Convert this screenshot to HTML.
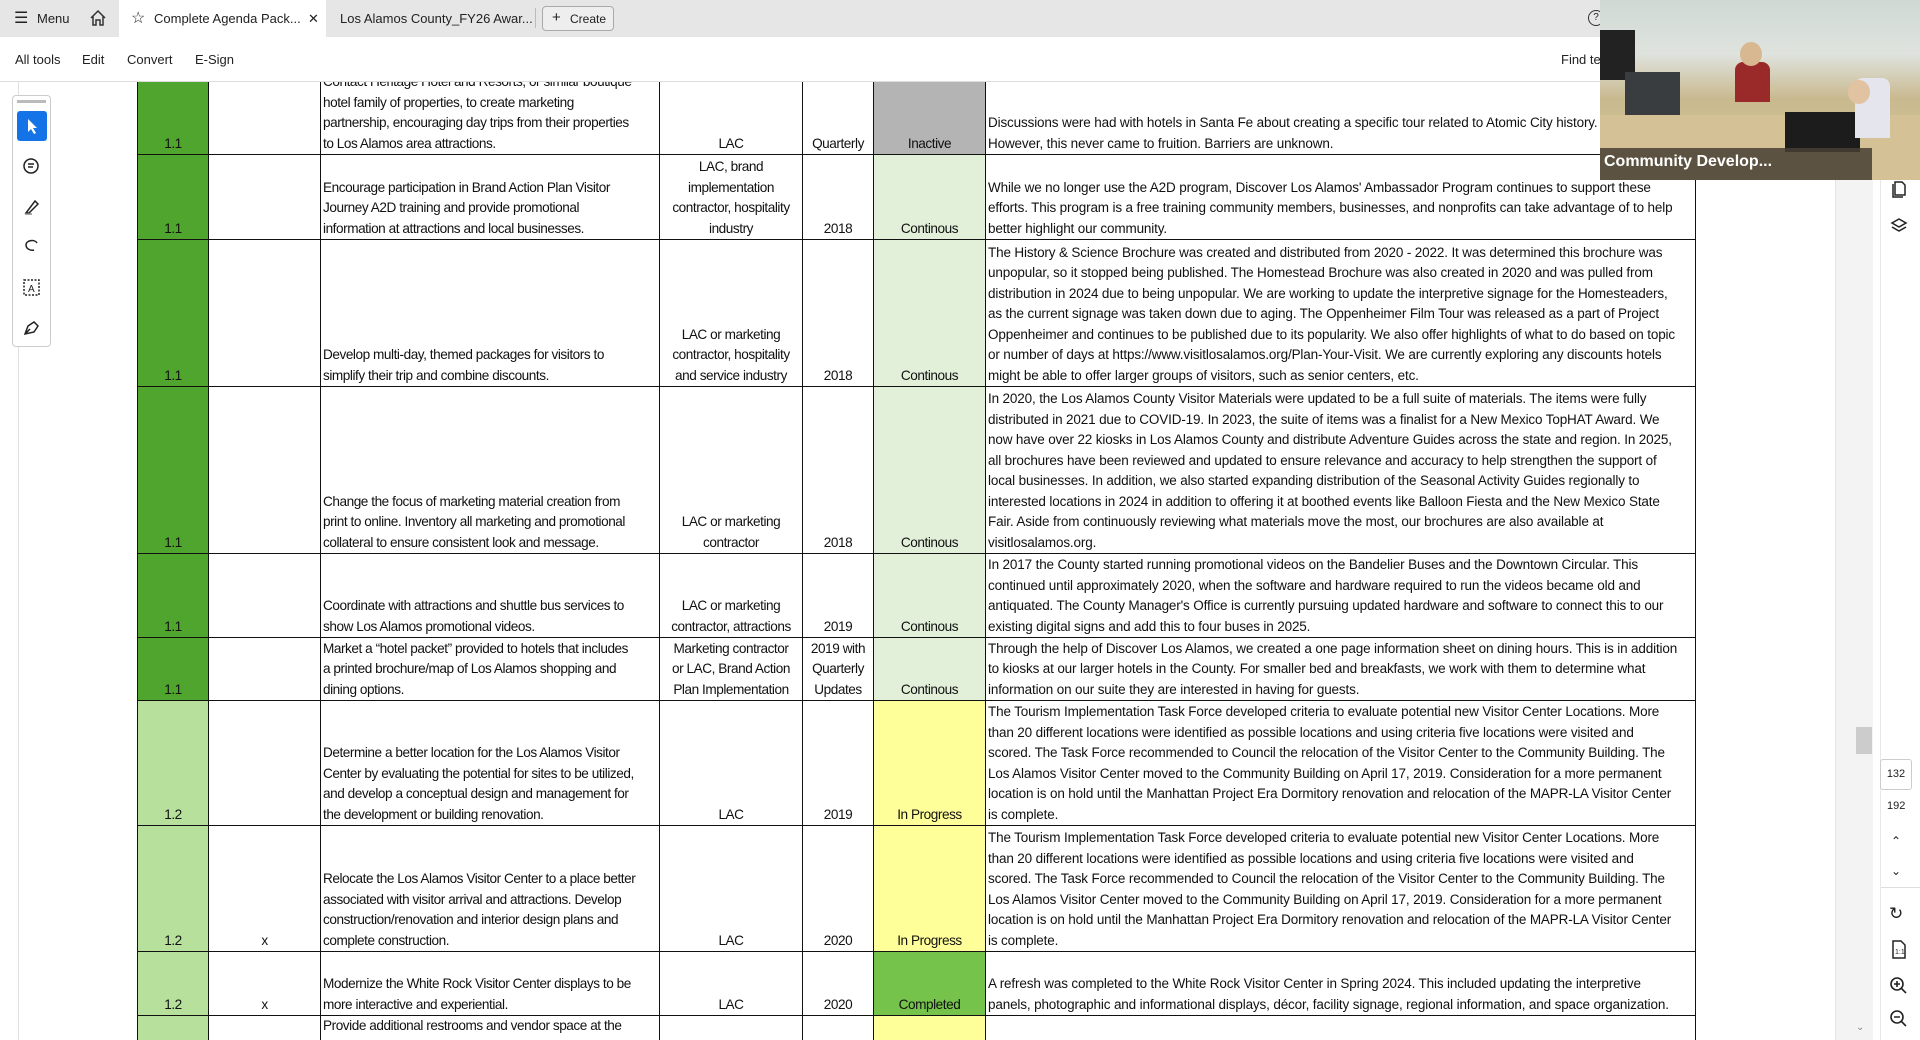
<!DOCTYPE html>
<html><head><meta charset="utf-8"><style>
*{box-sizing:border-box;margin:0;padding:0}
html,body{width:1920px;height:1040px;overflow:hidden}
body{background:#fff;font-family:"Liberation Sans",sans-serif;position:relative;color:#222}
.tabbar{position:absolute;left:0;top:0;width:1920px;height:37px;background:#e6e6e6}
.tb{position:absolute;top:11px;font-size:13px;color:#222;white-space:nowrap}
.toolbar{position:absolute;left:0;top:37px;width:1920px;height:45px;background:#fff;border-bottom:1px solid #ddd}
.tl{position:absolute;top:15px;font-size:13px;color:#222}
.clip{position:absolute;left:0;top:82px;width:1880px;height:958px;overflow:hidden;background:#fff}
table{position:absolute;left:137px;top:-13px;border-collapse:collapse;table-layout:fixed;font-size:13.6px;letter-spacing:-0.45px;line-height:20.5px;color:#111}
td{border:1px solid #111;vertical-align:bottom;padding:0 2px 0 2px;white-space:nowrap;overflow:hidden}
td.c{text-align:center}
td.n{letter-spacing:-0.15px;font-size:13.5px}
.dg{background:#4fa52e}.lg{background:#b6e09c}.cont{background:#e2f0d9}.ina{background:#b4b4b4}.ip{background:#ffff99}.cmp{background:#76c34c}
.lt{position:absolute;left:12px;top:95px;width:39px;height:252px;border:1px solid #ccc;border-radius:4px;background:#fff}
.ic{position:absolute;left:4px;width:30px;height:30px}
.vline{position:absolute;left:18px;top:82px;width:1px;height:958px;background:#e0e0e0}
.rp{position:absolute;left:1880px;top:82px;width:40px;height:958px;background:#fff;border-left:1px solid #e8e8e8}
.sb{position:absolute;left:1835px;top:82px;width:38px;height:958px;background:#f3f3f3;border-left:1px solid #e4e4e4}
.video{position:absolute;left:1600px;top:0;width:320px;height:180px;background:linear-gradient(180deg,#cfd9d4 0%,#dfe3de 30%,#c9b98f 55%,#d8c89c 100%);overflow:hidden}
.vl{position:absolute;left:0;top:148px;width:272px;height:32px;background:rgba(70,62,50,.85);color:#fff;font-weight:bold;font-size:16px;padding:5px 4px}
</style></head><body>
<div class="tabbar">
 <div class="tb" style="left:14px;font-size:16px;top:8px">☰</div>
 <div class="tb" style="left:37px">Menu</div>
 <svg style="position:absolute;left:89px;top:9px" width="18" height="18" viewBox="0 0 18 18" fill="none" stroke="#333" stroke-width="1.5"><path d="M2 9 L9 2 L16 9 M4 7 V16 H7 V11 H11 V16 H14 V7"/></svg>
 <div style="position:absolute;left:119px;top:0;width:207px;height:37px;background:#fff"></div>
 <div class="tb" style="left:131px;font-size:16px;top:8px">☆</div>
 <div class="tb" style="left:154px">Complete Agenda Pack...</div>
 <div class="tb" style="left:308px">✕</div>
 <div class="tb" style="left:340px">Los Alamos County_FY26 Awar...</div>
 <div style="position:absolute;left:535px;top:8px;width:1px;height:20px;background:#bbb"></div>
 <div style="position:absolute;left:542px;top:6px;width:72px;height:25px;border:1px solid #aaa;border-radius:4px;background:#eee"></div>
 <div class="tb" style="left:552px;top:9px;font-size:15px">+</div>
 <div class="tb" style="left:570px;top:12px;font-size:12px">Create</div>
 <div style="position:absolute;left:1588px;top:10px;width:16px;height:16px;border:1.5px solid #333;border-radius:50%;font-size:10px;text-align:center;line-height:13px">?</div>
</div>
<div class="toolbar">
 <div class="tl" style="left:15px">All tools</div>
 <div class="tl" style="left:82px">Edit</div>
 <div class="tl" style="left:127px">Convert</div>
 <div class="tl" style="left:195px">E-Sign</div>
 <div class="tl" style="left:1561px">Find te</div>
</div>
<div class="clip">
<table>
<colgroup><col style="width:71px"><col style="width:112px"><col style="width:339px"><col style="width:143px"><col style="width:71px"><col style="width:112px"><col style="width:710px"></colgroup>
<tr style="height:85px"><td class="dg c">1.1</td><td></td><td>Contact Heritage Hotel and Resorts, or similar boutique<br>hotel family of properties, to create marketing<br>partnership, encouraging day trips from their properties<br>to Los Alamos area attractions.</td><td class="c">LAC</td><td class="c">Quarterly</td><td class="c ina">Inactive</td><td class="n">Discussions were had with hotels in Santa Fe about creating a specific tour related to Atomic City history.<br>However, this never came to fruition. Barriers are unknown.</td></tr>
<tr style="height:85px"><td class="dg c">1.1</td><td></td><td>Encourage participation in Brand Action Plan Visitor<br>Journey A2D training and provide promotional<br>information at attractions and local businesses.</td><td class="c">LAC, brand<br>implementation<br>contractor, hospitality<br>industry</td><td class="c">2018</td><td class="c cont">Continous</td><td class="n">While we no longer use the A2D program, Discover Los Alamos' Ambassador Program continues to support these<br>efforts. This program is a free training community members, businesses, and nonprofits can take advantage of to help<br>better highlight our community.</td></tr>
<tr style="height:147px"><td class="dg c">1.1</td><td></td><td>Develop multi-day, themed packages for visitors to<br>simplify their trip and combine discounts.</td><td class="c">LAC or marketing<br>contractor, hospitality<br>and service industry</td><td class="c">2018</td><td class="c cont">Continous</td><td class="n">The History &amp; Science Brochure was created and distributed from 2020 - 2022. It was determined this brochure was<br>unpopular, so it stopped being published. The Homestead Brochure was also created in 2020 and was pulled from<br>distribution in 2024 due to being unpopular. We are working to update the interpretive signage for the Homesteaders,<br>as the current signage was taken down due to aging. The Oppenheimer Film Tour was released as a part of Project<br>Oppenheimer and continues to be published due to its popularity. We also offer highlights of what to do based on topic<br>or number of days at https://www.visitlosalamos.org/Plan-Your-Visit. We are currently exploring any discounts hotels<br>might be able to offer larger groups of visitors, such as senior centers, etc.</td></tr>
<tr style="height:167px"><td class="dg c">1.1</td><td></td><td>Change the focus of marketing material creation from<br>print to online. Inventory all marketing and promotional<br>collateral to ensure consistent look and message.</td><td class="c">LAC or marketing<br>contractor</td><td class="c">2018</td><td class="c cont">Continous</td><td class="n">In 2020, the Los Alamos County Visitor Materials were updated to be a full suite of materials. The items were fully<br>distributed in 2021 due to COVID-19. In 2023, the suite of items was a finalist for a New Mexico TopHAT Award. We<br>now have over 22 kiosks in Los Alamos County and distribute Adventure Guides across the state and region. In 2025,<br>all brochures have been reviewed and updated to ensure relevance and accuracy to help strengthen the support of<br>local businesses. In addition, we also started expanding distribution of the Seasonal Activity Guides regionally to<br>interested locations in 2024 in addition to offering it at boothed events like Balloon Fiesta and the New Mexico State<br>Fair. Aside from continuously reviewing what materials move the most, our brochures are also available at<br>visitlosalamos.org.</td></tr>
<tr style="height:84px"><td class="dg c">1.1</td><td></td><td>Coordinate with attractions and shuttle bus services to<br>show Los Alamos promotional videos.</td><td class="c">LAC or marketing<br>contractor, attractions</td><td class="c">2019</td><td class="c cont">Continous</td><td class="n">In 2017 the County started running promotional videos on the Bandelier Buses and the Downtown Circular. This<br>continued until approximately 2020, when the software and hardware required to run the videos became old and<br>antiquated. The County Manager's Office is currently pursuing updated hardware and software to connect this to our<br>existing digital signs and add this to four buses in 2025.</td></tr>
<tr style="height:63px"><td class="dg c">1.1</td><td></td><td>Market a “hotel packet” provided to hotels that includes<br>a printed brochure/map of Los Alamos shopping and<br>dining options.</td><td class="c">Marketing contractor<br>or LAC, Brand Action<br>Plan Implementation</td><td class="c">2019 with<br>Quarterly<br>Updates</td><td class="c cont">Continous</td><td class="n">Through the help of Discover Los Alamos, we created a one page information sheet on dining hours. This is in addition<br>to kiosks at our larger hotels in the County. For smaller bed and breakfasts, we work with them to determine what<br>information on our suite they are interested in having for guests.</td></tr>
<tr style="height:125px"><td class="lg c">1.2</td><td></td><td>Determine a better location for the Los Alamos Visitor<br>Center by evaluating the potential for sites to be utilized,<br>and develop a conceptual design and management for<br>the development or building renovation.</td><td class="c">LAC</td><td class="c">2019</td><td class="c ip">In Progress</td><td class="n">The Tourism Implementation Task Force developed criteria to evaluate potential new Visitor Center Locations. More<br>than 20 different locations were identified as possible locations and using criteria five locations were visited and<br>scored. The Task Force recommended to Council the relocation of the Visitor Center to the Community Building. The<br>Los Alamos Visitor Center moved to the Community Building on April 17, 2019. Consideration for a more permanent<br>location is on hold until the Manhattan Project Era Dormitory renovation and relocation of the MAPR-LA Visitor Center<br>is complete.</td></tr>
<tr style="height:126px"><td class="lg c">1.2</td><td class="c">x</td><td>Relocate the Los Alamos Visitor Center to a place better<br>associated with visitor arrival and attractions. Develop<br>construction/renovation and interior design plans and<br>complete construction.</td><td class="c">LAC</td><td class="c">2020</td><td class="c ip">In Progress</td><td class="n">The Tourism Implementation Task Force developed criteria to evaluate potential new Visitor Center Locations. More<br>than 20 different locations were identified as possible locations and using criteria five locations were visited and<br>scored. The Task Force recommended to Council the relocation of the Visitor Center to the Community Building. The<br>Los Alamos Visitor Center moved to the Community Building on April 17, 2019. Consideration for a more permanent<br>location is on hold until the Manhattan Project Era Dormitory renovation and relocation of the MAPR-LA Visitor Center<br>is complete.</td></tr>
<tr style="height:64px"><td class="lg c">1.2</td><td class="c">x</td><td>Modernize the White Rock Visitor Center displays to be<br>more interactive and experiential.</td><td class="c">LAC</td><td class="c">2020</td><td class="c cmp">Completed</td><td class="n">A refresh was completed to the White Rock Visitor Center in Spring 2024. This included updating the interpretive<br>panels, photographic and informational displays, décor, facility signage, regional information, and space organization.</td></tr>
<tr style="height:60px"><td class="lg c"></td><td></td><td style="vertical-align:top">Provide additional restrooms and vendor space at the</td><td></td><td></td><td class="ip"></td><td></td></tr>
</table>
</div>
<div class="vline"></div>
<div class="lt">
 <div style="position:absolute;left:4px;top:4px;width:29px;height:3px;background:#bbb"></div>
 <div class="ic" style="top:15px;background:#1473e6;border-radius:3px"><svg width="30" height="30"><path d="M11 8 L11 21 L14 18 L17 23 L19 22 L16 17 L20 17 Z" fill="#fff"/></svg></div>
 <svg class="ic" style="top:56px" width="30" height="30" fill="none" stroke="#222" stroke-width="1.5"><circle cx="14" cy="14" r="7"/><path d="M11 12h6M11 15h5"/></svg>
 <svg class="ic" style="top:96px" width="30" height="30" fill="none" stroke="#222" stroke-width="1.5"><path d="M9 21 L18 9 L21 12 L12 21 Z"/><path d="M8 22h7" stroke="#888"/></svg>
 <svg class="ic" style="top:136px" width="30" height="30" fill="none" stroke="#222" stroke-width="1.5"><path d="M20 11 C18 7 9 8 9 13 C9 17 14 19 17 18"/></svg>
 <svg class="ic" style="top:177px" width="30" height="30" fill="none" stroke="#222" stroke-width="1.5"><rect x="7" y="7" width="15" height="15" stroke-dasharray="2 1.5"/><text x="11" y="19" font-size="10" fill="#222" stroke="none" font-family="Liberation Sans">A</text></svg>
 <svg class="ic" style="top:217px" width="30" height="30" fill="none" stroke="#222" stroke-width="1.5"><path d="M8 21 L11 13 L17 9 L21 13 L17 19 Z M8 21 L13 16"/></svg>
</div>
<div class="sb"><div style="position:absolute;left:20px;top:645px;width:16px;height:27px;background:#ccc"></div><div style="position:absolute;left:20px;top:940px;font-size:10px;color:#888">⌄</div></div>
<div class="rp">
 <svg style="position:absolute;left:8px;top:96px" width="20" height="20" fill="none" stroke="#222" stroke-width="1.5"><path d="M6 4h7l3 3v10H6z"/><path d="M4 6v13h10"/></svg>
 <svg style="position:absolute;left:8px;top:134px" width="20" height="20" fill="none" stroke="#222" stroke-width="1.5"><path d="M10 3l7 4-7 4-7-4z M3 11l7 4 7-4"/></svg>
 <div style="position:absolute;left:-1px;top:677px;width:32px;height:31px;border:1px solid #ccc;border-radius:3px;font-size:11px;text-align:center;line-height:29px">132</div>
 <div style="position:absolute;left:6px;top:718px;font-size:11px">192</div>
 <div style="position:absolute;left:10px;top:752px;font-size:12px">⌃</div>
 <div style="position:absolute;left:10px;top:782px;font-size:12px">⌄</div>
 <div style="position:absolute;left:0;top:805px;width:40px;height:1px;background:#ddd"></div>
 <div style="position:absolute;left:8px;top:822px;font-size:17px">↻</div>
 <svg style="position:absolute;left:8px;top:857px" width="20" height="22" fill="none" stroke="#222" stroke-width="1.5"><path d="M4 2h8l4 4v13H4z"/><text x="6" y="15" font-size="7" fill="#222" stroke="none">1:1</text></svg>
 <svg style="position:absolute;left:8px;top:894px" width="20" height="20" fill="none" stroke="#222" stroke-width="1.6"><circle cx="8" cy="8" r="6"/><path d="M12 12l5 5M5 8h6M8 5v6"/></svg>
 <svg style="position:absolute;left:8px;top:927px" width="20" height="20" fill="none" stroke="#222" stroke-width="1.6"><circle cx="8" cy="8" r="6"/><path d="M12 12l5 5M5 8h6"/></svg>
</div>
<div class="video">
 <div style="position:absolute;left:0;top:30px;width:35px;height:50px;background:#222"></div>
 <div style="position:absolute;left:25px;top:72px;width:55px;height:60px;background:#3a3d40"></div>
 <div style="position:absolute;left:0;top:115px;width:320px;height:65px;background:#d4c195"></div>
 <div style="position:absolute;left:135px;top:62px;width:35px;height:40px;background:#9a2a2a;border-radius:8px 8px 0 0"></div>
 <div style="position:absolute;left:140px;top:42px;width:22px;height:24px;background:#d8b890;border-radius:50%"></div>
 <div style="position:absolute;left:185px;top:112px;width:75px;height:40px;background:#1c1c1c"></div>
 <div style="position:absolute;left:255px;top:78px;width:35px;height:60px;background:#e5e5ee;border-radius:8px 8px 0 0"></div>
 <div style="position:absolute;left:248px;top:80px;width:22px;height:24px;background:#e1c3a2;border-radius:50%"></div>
 <div class="vl">Community Develop...</div>
</div>
</body></html>
